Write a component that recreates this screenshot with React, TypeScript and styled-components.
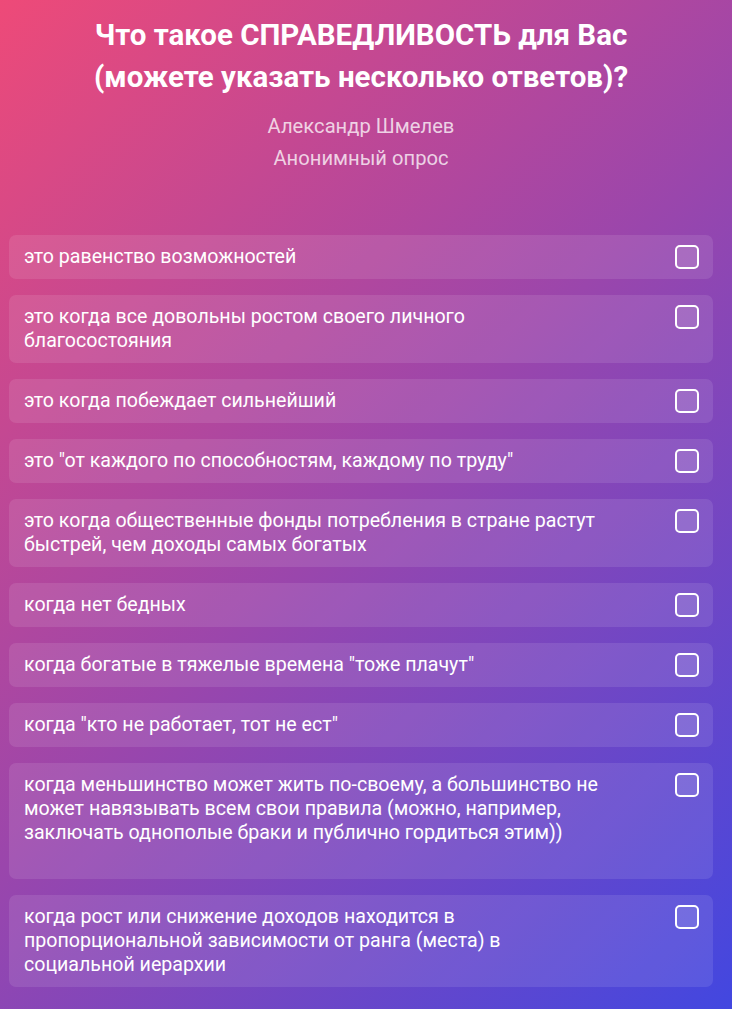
import React from "react";
import styled, { createGlobalStyle } from "styled-components";

const GlobalStyle = createGlobalStyle`
  html, body { margin: 0; padding: 0; }
  body {
    font-family: Roboto, "Liberation Sans", sans-serif;
    background: linear-gradient(135deg, #ee4a78 0%, #9a46ac 50%, #4247e0 100%);
    min-height: 1009px;
  }
`;

const Page = styled.div`
  width: 704px;
  margin-left: 9px;
  padding-top: 14px;
  padding-bottom: 22px;
  display: flex;
  flex-direction: column;
`;

const Header = styled.header`
  display: flex;
  flex-direction: column;
  align-items: center;
  text-align: center;
  margin-bottom: 61px;
`;

const Title = styled.h1`
  margin: 0 0 12px;
  font-size: 29.5px;
  line-height: 42px;
  font-weight: 700;
  color: #fff;
`;

const Meta = styled.div`
  font-size: 20.2px;
  line-height: 32px;
  color: rgba(255, 255, 255, 0.75);
`;

const List = styled.div`
  display: flex;
  flex-direction: column;
  gap: 16px;
`;

const Option = styled.label<{ $extra?: boolean }>`
  display: flex;
  align-items: flex-start;
  justify-content: space-between;
  gap: 20px;
  padding: 10px 14px 10px 15px;
  padding-bottom: ${(p) => (p.$extra ? "34px" : "10px")};
  background: rgba(255, 255, 255, 0.1);
  border-radius: 7px;
  cursor: pointer;
`;

const OptionText = styled.span`
  font-size: 19.6px;
  line-height: 24px;
  color: #fff;
  max-width: 585px;
`;

const Box = styled.span`
  flex: none;
  width: 20px;
  height: 20px;
  border: 2px solid #fff;
  border-radius: 5px;
  background: rgba(255, 255, 255, 0.12);
`;

const options: { text: string; extra?: boolean }[] = [
  { text: "это равенство возможностей" },
  { text: "это когда все довольны ростом своего личного благосостояния" },
  { text: "это когда побеждает сильнейший" },
  { text: "это \"от каждого по способностям, каждому по труду\"" },
  { text: "это когда общественные фонды потребления в стране растут быстрей, чем доходы самых богатых" },
  { text: "когда нет бедных" },
  { text: "когда богатые в тяжелые времена \"тоже плачут\"" },
  { text: "когда \"кто не работает, тот не ест\"" },
  {
    text: "когда меньшинство может жить по-своему, а большинство не может навязывать всем свои правила (можно, например, заключать однополые браки и публично гордиться этим))",
    extra: true,
  },
  { text: "когда рост или снижение доходов находится в пропорциональной зависимости от ранга (места) в социальной иерархии" },
];

export default function App() {
  return (
    <>
      <GlobalStyle />
      <Page>
        <Header>
          <Title>
            Что такое СПРАВЕДЛИВОСТЬ для Вас
            <br />
            (можете указать несколько ответов)?
          </Title>
          <Meta>Александр Шмелев</Meta>
          <Meta>Анонимный опрос</Meta>
        </Header>
        <List>
          {options.map((o, i) => (
            <Option key={i} $extra={o.extra}>
              <OptionText>{o.text}</OptionText>
              <Box />
            </Option>
          ))}
        </List>
      </Page>
    </>
  );
}
